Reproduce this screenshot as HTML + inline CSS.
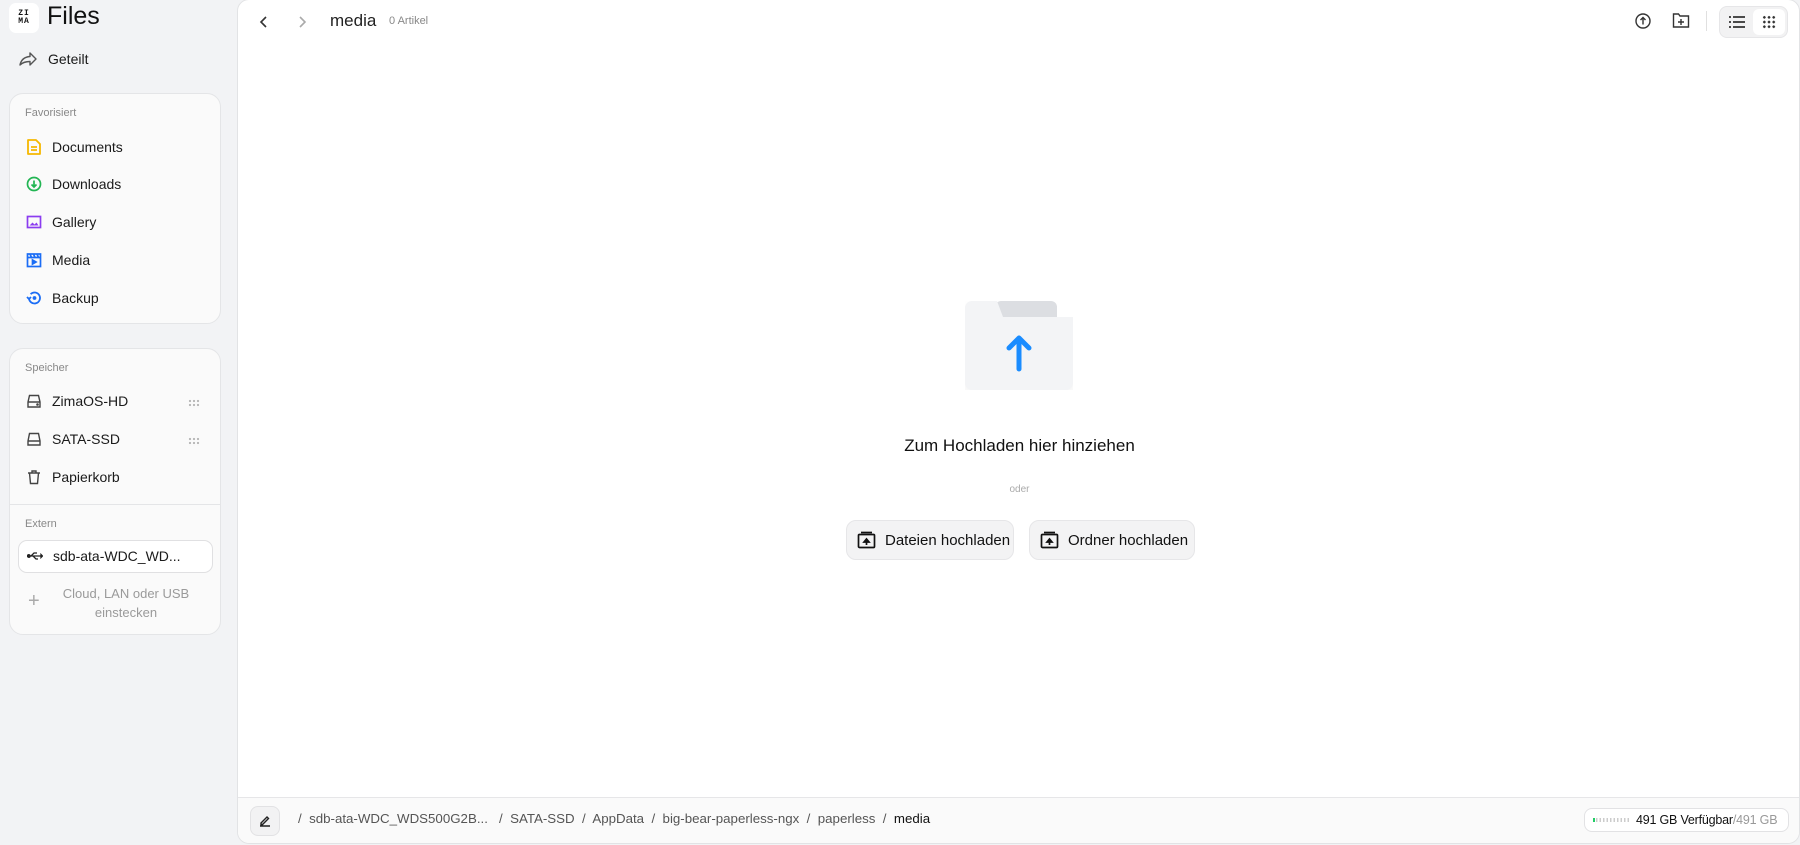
<!DOCTYPE html>
<html><head><meta charset="utf-8"><style>
*{box-sizing:border-box;margin:0;padding:0}
body{width:1800px;height:845px;background:#f2f3f5;font-family:"Liberation Sans",sans-serif;color:#111;position:relative;overflow:hidden;font-size:14px}
.abs{position:absolute}
.box{position:absolute;left:9px;width:212px;background:#fafafa;border:1px solid #e4e5e7;border-radius:14px}
.item{position:absolute;left:26px;display:flex;align-items:center;font-size:14px;color:#1a1a1a}
.item svg{margin-right:10px}
.lbl{position:absolute;left:25px;font-size:11px;color:#888}
.dots{position:absolute;left:188px;width:12px;height:9px;background-image:radial-gradient(circle,#bbb 1.1px,transparent 1.3px);background-size:4px 4px}
.main{position:absolute;left:237px;top:-1px;width:1563px;height:845px;background:#fff;border:1px solid #e2e3e5;border-radius:12px;overflow:hidden}
.btn{position:absolute;top:520px;height:40px;background:#f3f3f4;border:1px solid #e6e6e8;border-radius:10px;display:flex;align-items:center;font-size:15px;padding-left:10px}
.btn svg{margin-right:9px}
</style></head><body>
<div class="abs" style="left:9px;top:3px;width:30px;height:30px;background:#fff;border-radius:7px;font:bold 8px/8px 'Liberation Mono',monospace;text-align:center;padding-top:7px;letter-spacing:1px">ZI<br>MA</div>
<div class="abs" style="left:47px;top:2px;font-size:25px;color:#111">Files</div>
<div class="item" style="top:51px;left:18px"><svg width="20" height="16" viewBox="0 0 20 16" fill="none" stroke="#555" stroke-width="1.4"><path d="M12 2l6 6-6 6v-3.5C7 10.5 4 12 2 14c1-5 4-8 10-8.5z" stroke-linejoin="round"/></svg><span>Geteilt</span></div>

<div class="box" style="top:93px;height:231px"></div>
<div class="lbl" style="top:107px">Favorisiert</div>
<div class="item" style="top:138px"><svg width="16" height="18" viewBox="0 0 16 18" fill="none" stroke="#f5b800" stroke-width="1.8"><path d="M2 2h8l4 4v10H2z" stroke-linejoin="round"/><path d="M5 9h6M5 12h6"/></svg>Documents</div>
<div class="item" style="top:176px"><svg width="16" height="16" viewBox="0 0 16 16" fill="none" stroke="#22b553" stroke-width="1.7"><circle cx="8" cy="8" r="6.5"/><path d="M8 4.5v6M5.5 8.5L8 11l2.5-2.5"/></svg>Downloads</div>
<div class="item" style="top:214px"><svg width="16" height="16" viewBox="0 0 16 16" fill="none" stroke="#8b3cf0" stroke-width="1.7"><rect x="1.5" y="2.5" width="13" height="11"/><path d="M3.5 11.5l3-3 2 2 2-2 2 3z" fill="#8b3cf0" stroke="none"/></svg>Gallery</div>
<div class="item" style="top:252px"><svg width="16" height="16" viewBox="0 0 16 16" fill="none" stroke="#1b6df5" stroke-width="1.7"><rect x="1.5" y="2" width="13" height="12.5"/><path d="M1.5 5.5h13M4 2l1.5 3.5M7.5 2L9 5.5M11 2l1.5 3.5"/><path d="M6.5 8v4l3.5-2z" fill="#1b6df5"/></svg>Media</div>
<div class="item" style="top:290px"><svg width="16" height="16" viewBox="0 0 16 16" fill="none" stroke="#1b6df5" stroke-width="1.8"><path d="M3 8a5.5 5.5 0 1 0 1.6-3.9"/><path d="M1 7l2 2 2-2"/><circle cx="8.5" cy="8" r="1" fill="#1b6df5"/></svg>Backup</div>

<div class="box" style="top:348px;height:287px"></div>
<div class="lbl" style="top:362px">Speicher</div>
<div class="item" style="top:393px"><svg width="16" height="16" viewBox="0 0 16 16" fill="none" stroke="#444" stroke-width="1.4"><path d="M2 9l1.5-6.5h9L14 9v5H2z M2 9h12"/><circle cx="11.5" cy="11.5" r=".6" fill="#444"/></svg>ZimaOS-HD</div>
<div class="dots" style="top:399px"></div>
<div class="item" style="top:431px"><svg width="16" height="16" viewBox="0 0 16 16" fill="none" stroke="#444" stroke-width="1.4"><path d="M2 10l1.5-7.5h9L14 10v4H2z M2 10h12"/></svg>SATA-SSD</div>
<div class="dots" style="top:437px"></div>
<div class="item" style="top:469px"><svg width="16" height="16" viewBox="0 0 16 16" fill="none" stroke="#444" stroke-width="1.4"><path d="M2 4h12M6 4V2h4v2M3.5 4l1 10.5h7l1-10.5"/></svg>Papierkorb</div>
<div class="abs" style="left:10px;top:504px;width:210px;height:1px;background:#e4e5e7"></div>
<div class="lbl" style="top:518px">Extern</div>
<div class="abs" style="left:18px;top:540px;width:195px;height:33px;background:#fff;border:1px solid #e0e0e2;border-radius:9px"></div>
<div class="item" style="top:548px;left:27px"><svg width="16" height="16" viewBox="0 0 16 16" fill="none" stroke="#222" stroke-width="1.3"><path d="M1 8h13M4 8l3-3h3M6 8l3 3h2"/><circle cx="1.8" cy="8" r="1.3" fill="#222"/><path d="M14 6.5v3l1.5-1.5z" fill="#222"/></svg>sdb-ata-WDC_WD...</div>
<div class="abs" style="left:28px;top:590px;font-size:20px;color:#aaa;font-weight:300">+</div>
<div class="abs" style="left:46px;top:584px;width:160px;text-align:center;font-size:13px;line-height:19px;color:#9a9a9a">Cloud, LAN oder USB<br>einstecken</div>

<div class="main">
 <svg class="abs" style="left:21px;top:15px" width="10" height="14" viewBox="0 0 10 14" fill="none" stroke="#333" stroke-width="1.6"><path d="M7 2L2 7l5 5"/></svg>
 <svg class="abs" style="left:59px;top:15px" width="10" height="14" viewBox="0 0 10 14" fill="none" stroke="#aaa" stroke-width="1.6"><path d="M3 2l5 5-5 5"/></svg>
 <div class="abs" style="left:92px;top:11px;font-size:17px;color:#222">media</div>
 <div class="abs" style="left:151px;top:15px;font-size:11px;color:#888">0 Artikel</div>
 <svg class="abs" style="left:1396px;top:12px" width="18" height="18" viewBox="0 0 18 18" fill="none" stroke="#333" stroke-width="1.4"><circle cx="9" cy="9" r="7"/><path d="M9 12.5V5.5M6.5 8L9 5.5 11.5 8"/></svg>
 <svg class="abs" style="left:1434px;top:12px" width="18" height="17" viewBox="0 0 18 17" fill="none" stroke="#333" stroke-width="1.4"><path d="M1.5 2h5l1.5 2h8.5v11h-15z"/><path d="M9 7v6M6 10h6"/></svg>
 <div class="abs" style="left:1468px;top:11px;width:1px;height:20px;background:#e0e0e0"></div>
 <div class="abs" style="left:1481px;top:6px;width:69px;height:32px;background:#f2f2f3;border:1px solid #e6e6e8;border-radius:8px"></div>
 <svg class="abs" style="left:1490px;top:14px" width="18" height="16" viewBox="0 0 18 16" stroke="#333" stroke-width="1.7"><path d="M5 3h12M5 8h12M5 13h12M1 3h2M1 8h2M1 13h2"/></svg>
 <div class="abs" style="left:1515px;top:9px;width:32px;height:26px;background:#fff;border-radius:6px"></div>
 <div class="abs" style="left:1524px;top:15px;width:14px;height:14px;background-image:radial-gradient(circle,#333 1.2px,transparent 1.4px);background-size:4.7px 4.7px"></div>

 <div class="abs" style="left:727px;top:301px;width:108px;height:90px">
  <div class="abs" style="left:30px;top:0;width:62px;height:20px;background:#dcdee2;border-radius:6px 6px 0 0"></div>
  <div class="abs" style="left:0;top:0;width:108px;height:89px;background:#f3f4f6;border-radius:7px;box-shadow:0 8px 18px rgba(0,0,0,.06);clip-path:polygon(0 0,32px 0,38px 16px,108px 16px,108px 100%,0 100%)"></div>
  <svg class="abs" style="left:39px;top:32px" width="30" height="40" viewBox="0 0 30 40" fill="none" stroke="#1a8cff" stroke-width="5" stroke-linecap="round" stroke-linejoin="round"><path d="M15 36V5M5 15L15 5l10 10"/></svg>
 </div>
 <div class="abs" style="left:0;width:1563px;top:436px;text-align:center;font-size:17px;color:#111">Zum Hochladen hier hinziehen</div>
 <div class="abs" style="left:0;width:1563px;top:484px;text-align:center;font-size:10px;color:#aaa">oder</div>
 <div class="btn" style="left:608px;width:168px"><svg width="19" height="18" viewBox="0 0 19 18" fill="none" stroke="#111" stroke-width="1.7"><rect x="1.5" y="3.5" width="16" height="13" rx="1"/><path d="M4 1.5h11"/><path d="M9.5 14V9M7 11l2.5-3 2.5 3z" fill="#111"/></svg>Dateien hochladen</div>
 <div class="btn" style="left:791px;width:166px"><svg width="19" height="18" viewBox="0 0 19 18" fill="none" stroke="#111" stroke-width="1.7"><rect x="1.5" y="3.5" width="16" height="13" rx="1"/><path d="M4 1.5h11"/><path d="M9.5 14V9M7 11l2.5-3 2.5 3z" fill="#111"/></svg>Ordner hochladen</div>

 <div class="abs" style="left:0;top:797px;width:1563px;height:48px;background:#fafafa;border-top:1px solid #e6e6e8"></div>
 <div class="abs" style="left:12px;top:806px;width:30px;height:30px;background:#f2f2f3;border:1px solid #e2e2e4;border-radius:8px"></div>
 <svg class="abs" style="left:21px;top:814px" width="12" height="13" viewBox="0 0 12 13" fill="none" stroke="#222" stroke-width="1.4"><path d="M2 9l6-6 1.5 1.5-6 6H2z M1 12h10"/></svg>
 <div class="abs" style="left:60px;top:811px;font-size:13.3px;color:#555;white-space:pre">/  sdb-ata-WDC_WDS500G2B...   /  SATA-SSD  /  AppData  /  big-bear-paperless-ngx  /  paperless  /  <span style="color:#111">media</span></div>
 <div class="abs" style="left:1346px;top:808px;width:205px;height:24px;background:#fff;border:1px solid #e2e2e4;border-radius:8px"></div>
 <div class="abs" style="left:1355px;top:818px;width:1.5px;height:4px;background:#2c6"></div>
 <div class="abs" style="left:1358px;top:818px;width:33px;height:4px;background-image:repeating-linear-gradient(90deg,#ccc 0 1.5px,transparent 1.5px 3.5px)"></div>
 <div class="abs" style="left:1398px;top:813px;font-size:12.5px;color:#111;letter-spacing:-0.2px">491 GB Verfügbar<span style="color:#999">/491 GB</span></div>
</div>
</body></html>
